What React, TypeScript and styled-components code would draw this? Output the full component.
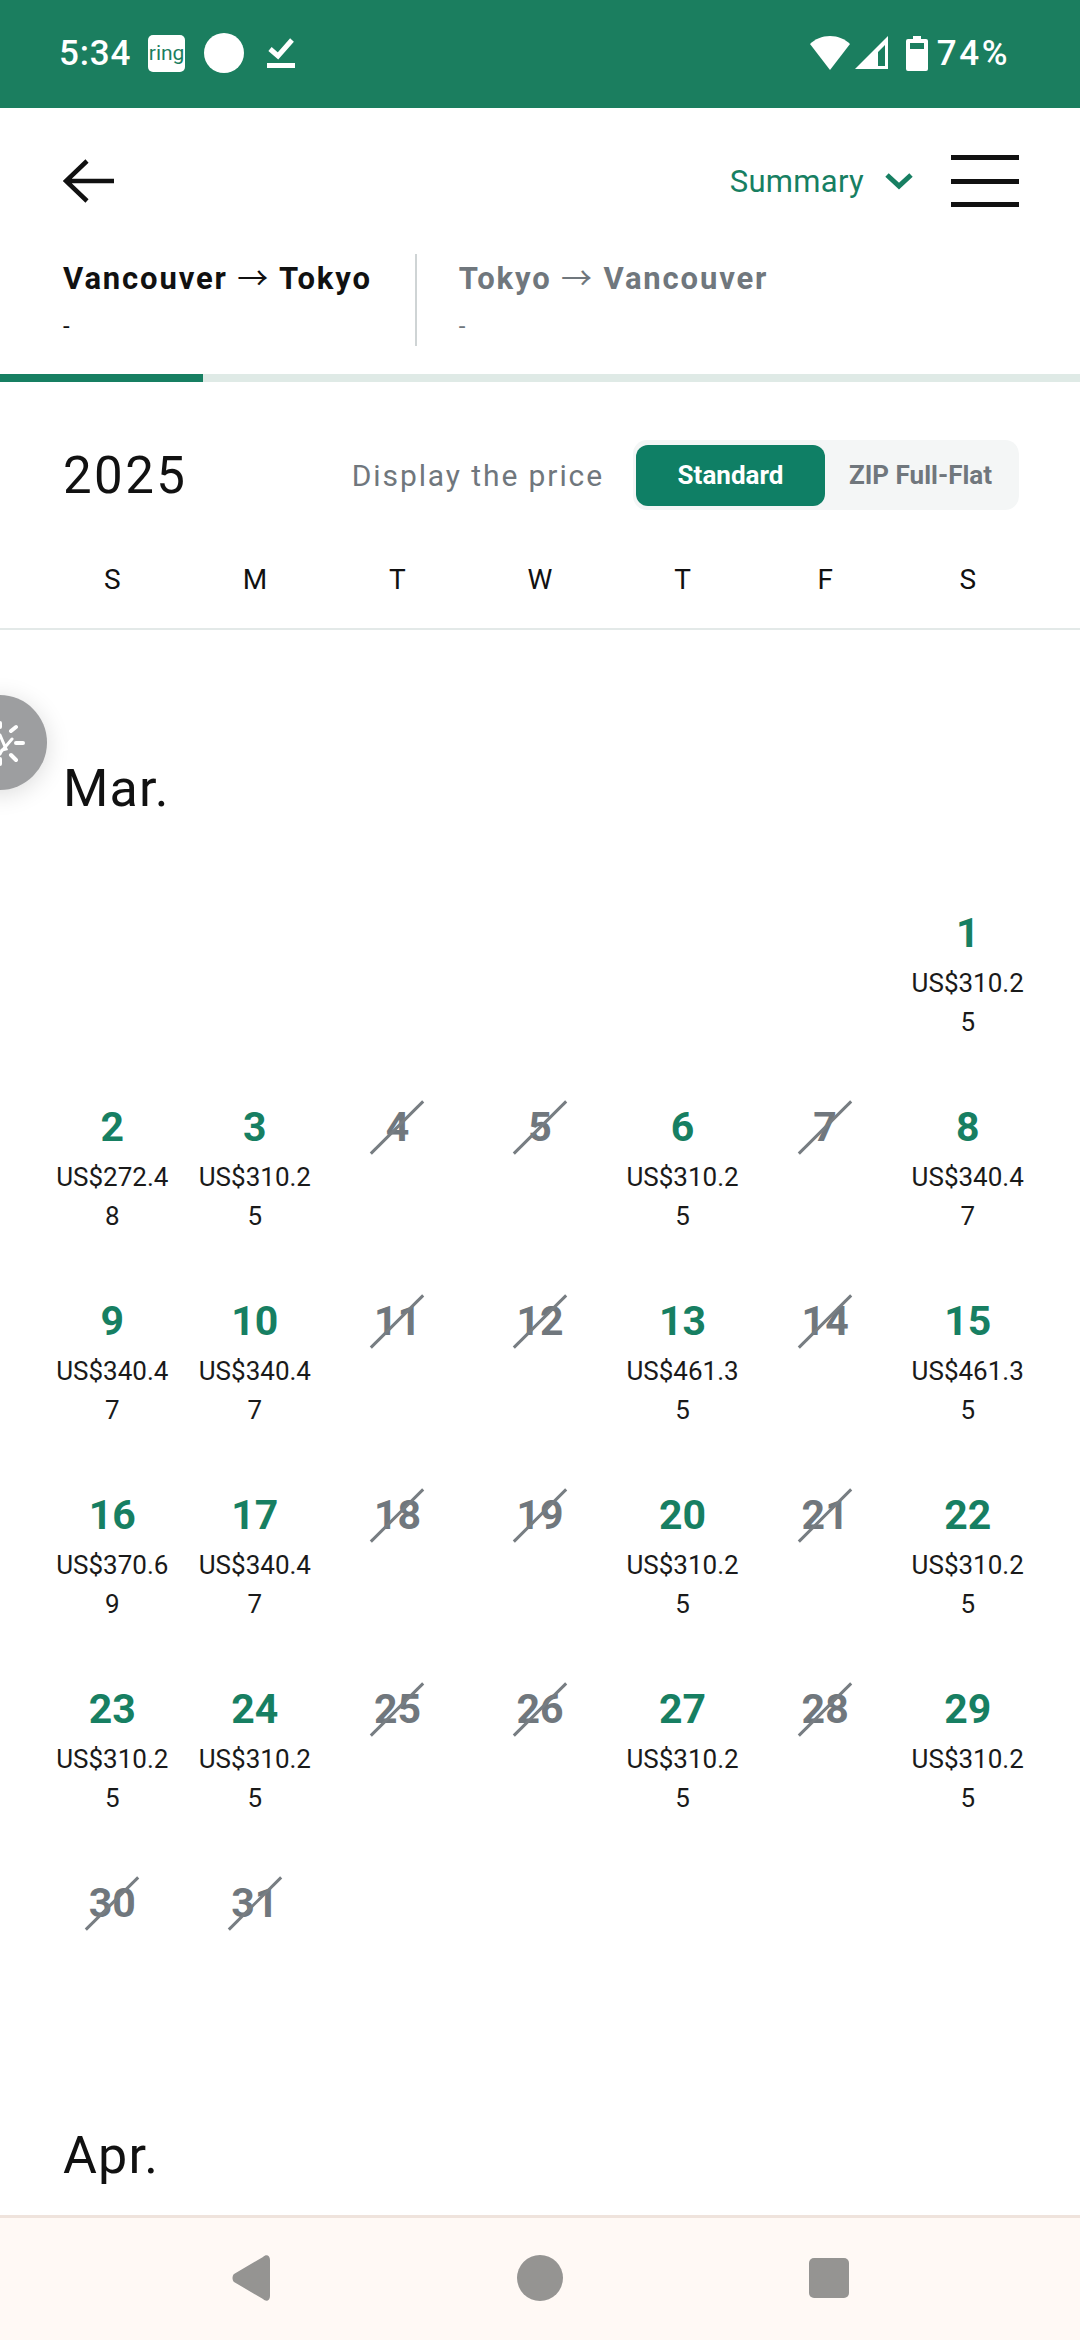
import * as React from 'react';

import styled, { createGlobalStyle } from 'styled-components';

const GREEN = '#177f62';
const GREY = '#70777d';

const GlobalStyle = createGlobalStyle`
	html, body {
		margin: 0;
		padding: 0;
		background: #fff;
	}
	body {
		font-family: Roboto, "Noto Sans CJK JP", "Liberation Sans", sans-serif;
		color: #111;
	}
`;

const Page = styled.div`
	position: relative;
	display: flex;
	flex-direction: column;
	width: 1080px;
	height: 2340px;
	overflow: hidden;
	background: #fff;
`;

const StatusBar = styled.div`
	display: flex;
	align-items: center;
	justify-content: space-between;
	flex: none;
	height: 108px;
	padding: 0 70px 2px 59px;
	box-sizing: border-box;
	background: #1b7e5f;
	color: #fff;
`;

const StatusGroup = styled.div`
	display: flex;
	align-items: center;
`;

const StatusText = styled.span`
	font-size: 35px;
	font-weight: 500;
	letter-spacing: 0.8px;
`;

const BatteryText = styled(StatusText)`
	margin-left: 9px;
	letter-spacing: 2.6px;
`;

const RingBadge = styled.span`
	display: flex;
	align-items: center;
	justify-content: center;
	width: 37px;
	height: 37px;
	margin-left: 17px;
	border-radius: 5px;
	background: #fff;
	color: #1b7e5f;
	font-size: 21px;
	line-height: 1;
`;

const Dot = styled.span`
	width: 40px;
	height: 40px;
	margin-left: 19px;
	border-radius: 50%;
	background: #fff;
`;

const Toolbar = styled.div`
	display: flex;
	align-items: center;
	justify-content: space-between;
	flex: none;
	height: 146px;
	padding: 0 61px 0 63px;
`;

const ToolbarRight = styled.div`
	display: flex;
	align-items: center;
`;

const SummaryLabel = styled.span`
	color: ${GREEN};
	font-size: 31px;
	letter-spacing: 0.3px;
`;

const Burger = styled.div`
	display: flex;
	flex-direction: column;
	justify-content: space-between;
	width: 68px;
	height: 52px;
	margin-left: 38px;

	span {
		height: 5px;
		background: #111;
	}
`;

const Tabs = styled.div`
	display: flex;
	flex: none;
	height: 92px;
	padding-left: 63px;
`;

const Tab = styled.div<{ $active?: boolean }>`
	display: flex;
	flex-direction: column;
	color: ${p => (p.$active ? '#111' : GREY)};

	& + & {
		margin-left: 43px;
		padding-left: 42px;
		border-left: 2px solid #cfd4d5;
	}
`;

const TabTitle = styled.div`
	margin-top: 4px;
	font-size: 31px;
	line-height: 36px;
	font-weight: 700;
	letter-spacing: 1.85px;
`;

const TabArrow = styled.span`
	font-family: "Noto Sans CJK JP", sans-serif;
	font-weight: 400;
`;

const TabDash = styled.div`
	margin-top: 14px;
	font-size: 24px;
	line-height: 30px;
`;

const Progress = styled.div`
	flex: none;
	height: 8px;
	margin-top: 28px;
	background: #dfeae6;

	div {
		height: 100%;
		background: ${GREEN};
	}
`;

const YearRow = styled.div`
	display: flex;
	align-items: center;
	flex: none;
	height: 70px;
	padding: 58px 61px 0 63px;
`;

const Year = styled.div`
	flex: 1;
	font-size: 51px;
	letter-spacing: 2.4px;
	font-weight: 400;
`;

const DisplayLabel = styled.div`
	color: ${GREY};
	font-size: 30px;
	letter-spacing: 1.9px;
`;

const Toggle = styled.div`
	display: flex;
	align-items: center;
	height: 70px;
	margin-left: 29px;
	padding: 0 3px;
	box-sizing: border-box;
	border-radius: 14px;
	background: #f4f6f6;
`;

const ToggleOption = styled.div<{ $active?: boolean }>`
	display: flex;
	align-items: center;
	justify-content: center;
	width: ${p => (p.$active ? '189px' : '191px')};
	height: 61px;
	border-radius: 12px;
	background: ${p => (p.$active ? '#0f7f65' : 'transparent')};
	color: ${p => (p.$active ? '#fff' : GREY)};
	font-size: 26px;
	font-weight: 700;
`;

const WeekHeader = styled.div`
	display: grid;
	grid-template-columns: repeat(7, 1fr);
	flex: none;
	padding: 50px 41px 28px;
	border-bottom: 2px solid #e3e9e8;
	font-size: 28px;
	line-height: 40px;
	text-align: center;
`;

const Scroll = styled.div`
	flex: 1;
	min-height: 0;
	overflow: hidden;
`;

const MonthTitle = styled.h2`
	margin: 0;
	padding-left: 63px;
	font-size: 52px;
	line-height: 60px;
	font-weight: 400;
	letter-spacing: 1.2px;
`;

const MarTitle = styled(MonthTitle)`
	margin-top: 129px;
`;

const DayGrid = styled.div`
	display: grid;
	grid-template-columns: repeat(7, 1fr);
	grid-auto-rows: 194px;
	margin: 90px 0 53px;
	padding: 0 41px;
`;

const DayCell = styled.div<{ $start?: number }>`
	grid-column-start: ${p => p.$start || 'auto'};
	display: flex;
	flex-direction: column;
	align-items: center;
	padding: 0 10px;
	text-align: center;
`;

const DayNumber = styled.div<{ $off?: boolean }>`
	position: relative;
	font-size: 41px;
	line-height: 48px;
	font-weight: 700;
	color: ${p => (p.$off ? GREY : GREEN)};

	${p =>
		p.$off &&
		`
		&::after {
			content: '';
			position: absolute;
			left: 50%;
			top: 50%;
			width: 74px;
			height: 3px;
			margin: -1px 0 0 -37px;
			background: #777d82;
			transform: rotate(-45deg);
		}
	`}
`;

const Price = styled.div`
	width: 100%;
	margin-top: 7px;
	font-size: 26px;
	line-height: 39px;
	word-break: break-all;
	color: #1a1a1a;
`;

const HelperButton = styled.div`
	position: absolute;
	left: -48px;
	top: 695px;
	width: 95px;
	height: 95px;
	border-radius: 50%;
	background: #9d9ea0;
	box-shadow: 0 4px 24px rgba(0, 0, 0, 0.14);
	overflow: hidden;

	svg {
		display: block;
	}
`;

const NavBar = styled.div`
	display: flex;
	align-items: center;
	justify-content: center;
	gap: 246px;
	flex: none;
	height: 125px;
	box-sizing: border-box;
	padding-bottom: 3px;
	border-top: 3px solid #efe3dc;
	background: #fff9f5;
`;

const NavCircle = styled.div`
	width: 46px;
	height: 46px;
	border-radius: 50%;
	background: #959492;
`;

const NavSquare = styled.div`
	width: 40px;
	height: 40px;
	border-radius: 5px;
	background: #959492;
`;

interface Day {
	day: number;
	price?: string;
}

const MARCH: Day[] = [
	{ day: 1, price: '310.25' },
	{ day: 2, price: '272.48' },
	{ day: 3, price: '310.25' },
	{ day: 4 },
	{ day: 5 },
	{ day: 6, price: '310.25' },
	{ day: 7 },
	{ day: 8, price: '340.47' },
	{ day: 9, price: '340.47' },
	{ day: 10, price: '340.47' },
	{ day: 11 },
	{ day: 12 },
	{ day: 13, price: '461.35' },
	{ day: 14 },
	{ day: 15, price: '461.35' },
	{ day: 16, price: '370.69' },
	{ day: 17, price: '340.47' },
	{ day: 18 },
	{ day: 19 },
	{ day: 20, price: '310.25' },
	{ day: 21 },
	{ day: 22, price: '310.25' },
	{ day: 23, price: '310.25' },
	{ day: 24, price: '310.25' },
	{ day: 25 },
	{ day: 26 },
	{ day: 27, price: '310.25' },
	{ day: 28 },
	{ day: 29, price: '310.25' },
	{ day: 30 },
	{ day: 31 }
];

const WEEK = ['S', 'M', 'T', 'W', 'T', 'F', 'S'];

const App = () => (
	<Page>
		<GlobalStyle />
		<StatusBar>
			<StatusGroup>
				<StatusText>5:34</StatusText>
				<RingBadge>ring</RingBadge>
				<Dot />
				<svg width="30" height="36" viewBox="0 0 30 36" style={{ marginLeft: 22 }}>
					<path d="M4 14l8 7L26 5" fill="none" stroke="#fff" strokeWidth="5" />
					<rect x="1" y="28" width="28" height="5" fill="#fff" />
				</svg>
			</StatusGroup>
			<StatusGroup>
				<svg width="42" height="36" viewBox="0 0 42 36">
					<path d="M21 35L1 9C6 4 13 1 21 1s15 3 20 8z" fill="#fff" />
				</svg>
				<svg width="36" height="36" viewBox="0 0 36 36" style={{ marginLeft: 3 }}>
					<path d="M1 34L34 1v33z M24 31h7V10l-7 7z" fill="#fff" fillRule="evenodd" />
				</svg>
				<svg width="22" height="36" viewBox="0 0 22 36" style={{ marginLeft: 16 }}>
					<path d="M7 1h8v3h5a2 2 0 0 1 2 2v28a2 2 0 0 1-2 2H2a2 2 0 0 1-2-2V6a2 2 0 0 1 2-2h5z M4 8v6h14V8z" fill="#fff" fillRule="evenodd" />
				</svg>
				<BatteryText>74%</BatteryText>
			</StatusGroup>
		</StatusBar>
		<Toolbar>
			<svg width="52" height="44" viewBox="0 0 52 44">
				<path d="M24 2L3 22l21 20M3 22h48" fill="none" stroke="#111" strokeWidth="4.5" />
			</svg>
			<ToolbarRight>
				<SummaryLabel>Summary</SummaryLabel>
				<svg width="28" height="18" viewBox="0 0 28 18" style={{ marginLeft: 21 }}>
					<path d="M2 3l12 11L26 3" fill="none" stroke={GREEN} strokeWidth="5" />
				</svg>
				<Burger>
					<span />
					<span />
					<span />
				</Burger>
			</ToolbarRight>
		</Toolbar>
		<Tabs>
			<Tab $active={true}>
				<TabTitle>
					Vancouver <TabArrow>→</TabArrow> Tokyo
				</TabTitle>
				<TabDash>-</TabDash>
			</Tab>
			<Tab>
				<TabTitle>
					Tokyo <TabArrow>→</TabArrow> Vancouver
				</TabTitle>
				<TabDash>-</TabDash>
			</Tab>
		</Tabs>
		<Progress>
			<div style={{ width: 203 }} />
		</Progress>
		<YearRow>
			<Year>2025</Year>
			<DisplayLabel>Display the price</DisplayLabel>
			<Toggle>
				<ToggleOption $active={true}>Standard</ToggleOption>
				<ToggleOption>ZIP Full-Flat</ToggleOption>
			</Toggle>
		</YearRow>
		<WeekHeader>
			{WEEK.map((d, i) => (
				<div key={i}>{d}</div>
			))}
		</WeekHeader>
		<Scroll>
			<MarTitle>Mar.</MarTitle>
			<DayGrid>
				{MARCH.map(d => (
					<DayCell key={d.day} $start={d.day === 1 ? 7 : undefined}>
						<DayNumber $off={!d.price}>{d.day}</DayNumber>
						{d.price && <Price>US${d.price}</Price>}
					</DayCell>
				))}
			</DayGrid>
			<MonthTitle>Apr.</MonthTitle>
		</Scroll>
		<NavBar>
			<svg width="40" height="46" viewBox="0 0 40 46">
				<path d="M32 2c3-3 7-2 7 3v36c0 5-4 6-7 3L3 27c-2-2-2-6 0-8z" fill="#959492" />
			</svg>
			<NavCircle />
			<NavSquare />
		</NavBar>
		<HelperButton>
			<svg width="95" height="95" viewBox="0 0 95 95" fill="none" stroke="#fff" strokeLinecap="round">
				<path d="M59 36l5-4M64 48h7M59 60l5 5M48 28v4M48 64v5" strokeWidth="4" />
				<path d="M48 40l6 14-4 1 M50 55l-2 4 M48 58l12-14" strokeWidth="3" />
			</svg>
		</HelperButton>
	</Page>
);

export default App;
